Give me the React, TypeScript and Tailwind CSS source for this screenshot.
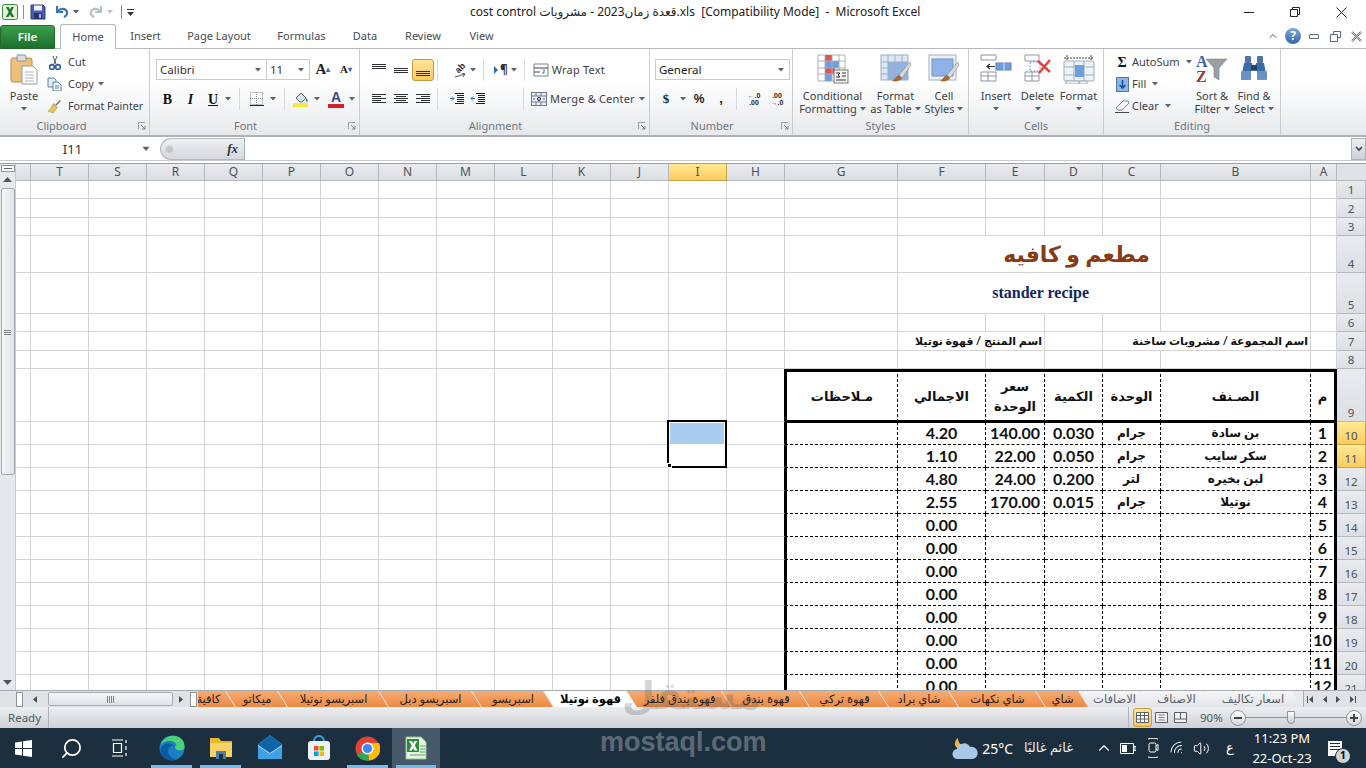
import type { ReactNode } from 'react'
import { ChevronUp, Search, Volume2, Wifi } from 'lucide-react'

const UI = "font-['Noto_Sans','DejaVu_Sans',sans-serif]"
const CELL = "font-['Lato','DejaVu_Sans',sans-serif]"

const COLS = ['', 'T', 'S', 'R', 'Q', 'P', 'O', 'N', 'M', 'L', 'K', 'J', 'I', 'H', 'G', 'F', 'E', 'D', 'C', 'B', 'A']

const RECIPE = [
  ['بن سادة', 'جرام', '0.030', '140.00', '4.20'],
  ['سكر سايب', 'جرام', '0.050', '22.00', '1.10'],
  ['لبن بخيره', 'لتر', '0.200', '24.00', '4.80'],
  ['نوتيلا', 'جرام', '0.015', '170.00', '2.55'],
]

const SHEET_TABS = [
  { name: 'كافية', w: 'w-[55px]', kind: 'orange' },
  { name: 'ميكاتو', w: 'w-[62px]', kind: 'orange' },
  { name: 'اسبريسو نوتيلا', w: 'w-[111px]', kind: 'orange' },
  { name: 'اسبريسو دبل', w: 'w-[103px]', kind: 'orange' },
  { name: 'اسبريسو', w: 'w-[82px]', kind: 'orange' },
  { name: 'قهوة نوتيلا', w: 'w-[93px]', kind: 'active' },
  { name: 'قهوة بندق فلفر', w: 'w-[105px]', kind: 'orange' },
  { name: 'قهوة بندق', w: 'w-[88px]', kind: 'orange' },
  { name: 'قهوة تركي', w: 'w-[89px]', kind: 'orange' },
  { name: 'شاي براد', w: 'w-[80px]', kind: 'orange' },
  { name: 'شاي نكهات', w: 'w-[97px]', kind: 'orange' },
  { name: 'شاي', w: 'w-[53px]', kind: 'orange' },
  { name: 'الاضافات', w: 'w-[71px]', kind: 'gray' },
  { name: 'الاصناف', w: 'w-[73px]', kind: 'gray' },
  { name: 'اسعار تكاليف', w: 'w-[100px]', kind: 'gray' },
]

function Caret({ className = '' }: { className?: string }) {
  return (
    <svg width="6" height="4" viewBox="0 0 6 4" className={className}>
      <path d="M0 0h6L3 3.5z" fill="#5b6168" />
    </svg>
  )
}

function Sep({ className = '' }: { className?: string }) {
  return <div className={`w-px h-[22px] bg-[#d5d8dc] ${className}`} />
}

function Launcher() {
  return (
    <svg width="8" height="8" viewBox="0 0 8 8" className="shrink-0">
      <path d="M.5 7V.5H7" fill="none" stroke="#9aa0a6" />
      <path d="M3 3l4 4M7 4v3H4" fill="none" stroke="#7b8188" />
    </svg>
  )
}

function Group({ label, className, children, launcher, labelPad = '' }: { label: string; className: string; children: ReactNode; launcher?: boolean; labelPad?: string }) {
  return (
    <div className={`flex flex-col shrink-0 h-[86px] border-r border-[#c9ccd1] ${className}`}>
      <div className="flex-1 flex min-h-0">{children}</div>
      <div className={`h-[18px] relative flex items-center justify-center text-[11px] text-[#6f767e] shrink-0 ${labelPad}`}>
        {label}
        {launcher && (
          <span className="absolute right-[3px] top-[5px]">
            <Launcher />
          </span>
        )}
      </div>
    </div>
  )
}

function BigButton({ icon, lines, className, caretLine }: { icon: ReactNode; lines: string[]; className: string; caretLine?: boolean }) {
  return (
    <div className={`flex flex-col items-center shrink-0 ${className}`}>
      <div className="h-[40px] pt-[5px] flex items-start justify-center">{icon}</div>
      {lines.map((l, i) => (
        <div key={l} className="h-[13px] leading-[13px] text-[11px] text-[#3b4148] whitespace-nowrap flex items-center gap-[3px]">
          {l}
          {caretLine && i === lines.length - 1 && <Caret />}
        </div>
      ))}
      {!caretLine && (
        <div className="h-[13px] flex items-center justify-center">
          <Caret />
        </div>
      )}
    </div>
  )
}

function LinesIcon({ rows, w = 14 }: { rows: [number, number, number][]; w?: number }) {
  return (
    <svg width={w} height="14" viewBox={`0 0 ${w} 14`}>
      {rows.map(([x, y, len]) => (
        <rect key={`${x}${y}`} x={x} y={y} width={len} height="1" fill="#2b2f33" />
      ))}
    </svg>
  )
}

function IndentIcon({ flip }: { flip?: boolean }) {
  return (
    <svg width="16" height="14" viewBox="0 0 16 14">
      <path d="M6 1.500h9M8 3.500h7M8 5.500h7M8 7.500h7M8 9.500h7M6 11.500h9" stroke="#1d1f22" fill="none" />
      {flip ? <path d="M5 6.500H1M3 4.500l-2 2 2 2" stroke="#2f6db5" fill="none" /> : <path d="M1 6.500h4M3 4.500l2 2-2 2" stroke="#2f6db5" fill="none" />}
    </svg>
  )
}

function PasteIcon() {
  return (
    <svg width="28" height="31" viewBox="0 0 28 31">
      <rect x="1" y="4" width="21" height="24" rx="2" fill="#eec07c" stroke="#b88a4c" />
      <rect x="7" y="1" width="9" height="6" rx="1" fill="#d9dde2" stroke="#8d9298" />
      <path d="M12 12h11l4 4v14H12z" fill="#fff" stroke="#8f98a3" />
      <path d="M15 18h9M15 21h9M15 24h9M15 27h9" stroke="#a9b4c0" />
    </svg>
  )
}

function CFIcon() {
  return (
    <svg width="32" height="30" viewBox="0 0 32 30">
      <path d="M1 1h27v26H1z" fill="#fff" stroke="#a9b2bd" />
      <rect x="8" y="1" width="7" height="6" fill="#e0524e" />
      <rect x="8" y="7" width="14" height="7" fill="#6f9ee0" />
      <rect x="8" y="14" width="10" height="6" fill="#e0524e" />
      <rect x="8" y="20" width="7" height="7" fill="#6f9ee0" />
      <path d="M8 1v26M15 1v26M22 1v26M1 7h27M1 14h27M1 20h27" stroke="#a9b2bd" fill="none" />
      <rect x="17" y="16" width="14" height="13" fill="#f4f4f4" stroke="#777" />
      <path d="M19 19h4l-2 2 2 2h-4M25 19h4M25 22h4M19 26h10" stroke="#333" fill="none" />
    </svg>
  )
}

function TableBrushIcon() {
  return (
    <svg width="32" height="30" viewBox="0 0 32 30">
      <rect x="1" y="1" width="27" height="25" fill="#dbe6f6" stroke="#a2aebc" />
      <rect x="8" y="8" width="20" height="18" fill="#8fb2e8" />
      <path d="M8 1v25M15 1v25M22 1v25M1 8h27M1 14h27M1 20h27" stroke="#a2aebc" fill="none" />
      <path d="M30 8L19 21l3 3L31 11z" fill="#d8d9da" stroke="#8e8e8e" strokeWidth=".6" />
      <path d="M19 21c-3 1-4 4-7 6 4 1 9 0 10-3z" fill="#a86a2c" />
    </svg>
  )
}

function CellStyleIcon() {
  return (
    <svg width="32" height="30" viewBox="0 0 32 30">
      <rect x="1" y="1" width="27" height="25" fill="#eef2f7" stroke="#a2aebc" />
      <rect x="4" y="5" width="21" height="17" fill="#8fb2e8" stroke="#6f92c8" />
      <path d="M30 8L19 21l3 3L31 11z" fill="#d8d9da" stroke="#8e8e8e" strokeWidth=".6" />
      <path d="M19 21c-3 1-4 4-7 6 4 1 9 0 10-3z" fill="#a86a2c" />
    </svg>
  )
}

function InsertCellsIcon() {
  return (
    <svg width="32" height="28" viewBox="0 0 32 28">
      <path d="M1 1h15v5H1zM1 18h15v9H1zM8 18v9M1 22h15" fill="#fff" stroke="#8d96a1" />
      <rect x="16" y="9" width="15" height="7" fill="#6f9ee0" stroke="#5f86bf" />
      <path d="M24 9v7" stroke="#dfe8f5" />
      <path d="M15 12.5H7M10 10l-3 2.5 3 2.5" stroke="#333" fill="none" strokeWidth="1.2" />
    </svg>
  )
}

function DeleteCellsIcon() {
  return (
    <svg width="28" height="28" viewBox="0 0 28 28">
      <path d="M1 1h14v6H1zM1 18h14v9H1zM8 18v9M1 22h14" fill="#fff" stroke="#8d96a1" />
      <rect x="6" y="8" width="10" height="9" fill="#fff" stroke="#5f86bf" strokeDasharray="1.5 1.5" />
      <path d="M14 7l12 11M26 6L15 19" stroke="#e0443e" strokeWidth="2.4" />
    </svg>
  )
}

function FormatCellsIcon() {
  return (
    <svg width="32" height="30" viewBox="0 0 32 30">
      <path d="M1 4h30M4 1v5M28 1v5" stroke="#444" strokeDasharray="2 1" fill="none" />
      <rect x="1" y="7" width="30" height="20" rx="1" fill="#eef2f7" stroke="#a2aebc" />
      <path d="M11 7v20M21 7v20M1 13h30M1 21h30" stroke="#a2aebc" />
      <rect x="12" y="11" width="9" height="12" fill="#6f9ee0" />
      <path d="M3 27h13v3H3zM16 27h8v3h-8z" fill="#eef2f7" stroke="#a2aebc" />
    </svg>
  )
}

function FunnelSort() {
  return (
    <div className="h-[29px] w-[32px] flex">
      <div className="font-['Liberation_Serif',serif] font-bold text-[16px] leading-[15px] flex flex-col w-[12px]">
        <span className="text-[#3a62ae]">A</span>
        <span className="text-[#9c3a36]">Z</span>
      </div>
      <svg width="22" height="24" viewBox="0 0 22 24" className="mt-[4px] -ml-[2px]">
        <path d="M0 1h21l-8 9v12l-5-3v-9z" fill="#9a9fa5" stroke="#7e8388" strokeWidth=".6" />
      </svg>
    </div>
  )
}

function Binoculars() {
  return (
    <svg width="28" height="28" viewBox="0 0 28 28">
      <rect x="5" y="2" width="6" height="7" rx="1" fill="#4d74a6" />
      <rect x="17" y="2" width="6" height="7" rx="1" fill="#4d74a6" />
      <path d="M4 9h8l1 5h2l1-5h8l3 16H19l-2-8h-6l-2 8H1z" fill="#3f6ba3" />
      <rect x="1" y="17" width="10" height="9" rx="1" fill="#6b92c4" />
      <rect x="17" y="17" width="10" height="9" rx="1" fill="#6b92c4" />
      <rect x="11" y="11" width="6" height="5" fill="#23436f" />
    </svg>
  )
}

function TitleBar() {
  return (
    <div className="h-[24px] shrink-0 flex items-center bg-white">
      <div className="w-[470px] flex items-center shrink-0 pl-[2px] gap-[5px]">
        <svg width="16" height="16" viewBox="0 0 16 16">
          <rect x=".5" y=".5" width="15" height="15" rx="2" fill="#dff0d8" stroke="#3c8a3c" />
          <path d="M4 3h2.7L8 5.8 9.4 3h2.5L9.3 8l2.9 5H9.4L8 10.2 6.5 13H3.9l2.8-5z" fill="#1f6e2b" />
        </svg>
        <div className="w-px h-[14px] bg-[#8a8f95]" />
        <svg width="16" height="16" viewBox="0 0 16 16" className="ml-[1px]">
          <path d="M1 1h12l2 2v12H1z" fill="#4a5db5" stroke="#2f3d80" />
          <rect x="4" y="1.5" width="8" height="5" fill="#eef1f8" />
          <rect x="4" y="9" width="8" height="6" fill="#27336b" />
          <rect x="9" y="10" width="2" height="4" fill="#a9b4dc" />
        </svg>
        <svg width="14" height="14" viewBox="0 0 14 14" className="ml-[4px]">
          <path d="M2 1v6h6" fill="none" stroke="#3a74bb" strokeWidth="2" />
          <path d="M3 6c2-3 8-3 9 1 .5 2-1 4-3 5" fill="none" stroke="#3a74bb" strokeWidth="2.2" />
        </svg>
        <Caret className="-ml-[1px]" />
        <svg width="14" height="14" viewBox="0 0 14 14" className="ml-[5px]">
          <path d="M12 1v6H6" fill="none" stroke="#b7bfc7" strokeWidth="2" />
          <path d="M11 6C9 3 3 3 2 7c-.5 2 1 4 3 5" fill="none" stroke="#b7bfc7" strokeWidth="2.2" />
        </svg>
        <Caret className="opacity-40 -ml-[1px]" />
        <div className="w-px h-[14px] bg-[#8a8f95] ml-[3px]" />
        <svg width="7" height="7" viewBox="0 0 7 7">
          <path d="M0 0h7v1H0zM0 3h7L3.5 7z" fill="#333" />
        </svg>
      </div>
      <div className="text-[12px] text-[#222] whitespace-pre w-[430px]">
        cost control قعدة زمان2023 - مشروبات.xls  [Compatibility Mode]  -  Microsoft Excel
      </div>
      <div className="ml-auto flex items-center pr-[2px]">
        <div className="w-[46px] h-[24px] flex items-center justify-center">
          <div className="w-[10px] h-px bg-[#222]" />
        </div>
        <div className="w-[46px] h-[24px] flex items-center justify-center">
          <svg width="10" height="10" viewBox="0 0 10 10">
            <path d="M2.5 2.5V.5h7v7h-2M.5 2.5h7v7h-7z" fill="none" stroke="#222" />
          </svg>
        </div>
        <div className="w-[46px] h-[24px] flex items-center justify-center">
          <svg width="11" height="11" viewBox="0 0 11 11">
            <path d="M.5.5l10 10M10.5.5l-10 10" stroke="#222" />
          </svg>
        </div>
      </div>
    </div>
  )
}

function MenuTabs() {
  const tabs = [
    { t: 'Insert', w: 'w-[57px]' },
    { t: 'Page Layout', w: 'w-[90px]' },
    { t: 'Formulas', w: 'w-[75px]' },
    { t: 'Data', w: 'w-[52px]' },
    { t: 'Review', w: 'w-[64px]' },
    { t: 'View', w: 'w-[53px]' },
  ]
  return (
    <div className="h-[25px] shrink-0 flex items-end bg-white border-b border-[#b5b9be] text-[11px] text-[#454c55]">
      <div className="w-[55px] h-[24px] mb-[-1px] rounded-t-[3px] bg-linear-to-b from-[#3c9e4c] to-[#1c6f2c] text-white font-semibold text-[11.5px] flex items-center justify-center border border-[#1d6a2b]">
        File
      </div>
      <div className="w-[56px] h-[25px] ml-[5px] mb-[-1px] bg-white rounded-t-[3px] border border-b-0 border-[#b5b9be] flex items-center justify-center z-10">
        Home
      </div>
      <div className="w-[1px]" />
      {tabs.map((tab) => (
        <div key={tab.t} className={`${tab.w} h-[24px] flex items-center justify-center`}>
          {tab.t}
        </div>
      ))}
      <div className="ml-auto h-[24px] flex items-center pr-[3px]">
        <ChevronUp size={12} strokeWidth={2} className="text-[#555] mr-[6px]" />
        <div className="w-[16px] h-[16px] rounded-full bg-linear-to-b from-[#7ea9df] to-[#2f66b0] text-white text-[12px] font-bold flex items-center justify-center mr-[8px]">
          ?
        </div>
        <div className="w-[10px] h-[5px] rounded-[1px] border border-[#5e6770] mr-[11px]" />
        <svg width="11" height="11" viewBox="0 0 11 11" className="mr-[10px]">
          <path d="M3.5 3V.5h7v6H8M.5 3.5h7v7h-7z" fill="none" stroke="#5e6770" />
        </svg>
        <svg width="11" height="11" viewBox="0 0 11 11" className="mr-[1px]">
          <path d="M1 1l9 9M10 1l-9 9" stroke="#5e6770" strokeWidth="2" />
          <path d="M1 1l9 9M10 1l-9 9" stroke="#fff" strokeWidth=".7" />
        </svg>
      </div>
    </div>
  )
}

function Clipboard() {
  return (
    <Group label="Clipboard" className="w-[150px]" launcher labelPad="pr-[26px]">
      <div className="w-[48px] shrink-0 flex flex-col items-center">
        <div className="h-[37px] pt-[5px]">
          <PasteIcon />
        </div>
        <div className="h-[17px] leading-[17px] text-[11px] text-[#3b4148] mt-[1px]">Paste</div>
        <Caret className="mt-[3px]" />
      </div>
      <div className="flex flex-col pt-[2px] text-[11px] text-[#3b4148]">
        <div className="h-[22px] flex items-center">
          <svg width="14" height="15" viewBox="0 0 14 15" className="mr-[6px]">
            <path d="M5 1l3 8M9 1L6 9" stroke="#555" fill="none" />
            <circle cx="4" cy="12" r="2.4" fill="none" stroke="#2f5f9f" strokeWidth="1.6" />
            <circle cx="10" cy="12" r="2.4" fill="none" stroke="#2f5f9f" strokeWidth="1.6" />
          </svg>
          Cut
        </div>
        <div className="h-[22px] flex items-center -ml-[1px]">
          <svg width="15" height="14" viewBox="0 0 15 14" className="mr-[6px]">
            <path d="M1 1h6l2 2v7H1z" fill="#e8eef7" stroke="#5b7fb0" />
            <path d="M6 5h5l3 3v6H6z" fill="#fff" stroke="#5b7fb0" />
            <path d="M8 9h4M8 11h4" stroke="#5b7fb0" />
          </svg>
          Copy
          <Caret className="ml-[4px]" />
        </div>
        <div className="h-[22px] flex items-center -ml-[1px]">
          <svg width="15" height="15" viewBox="0 0 15 15" className="mr-[6px]">
            <path d="M8 6l5-5 1 1-5 5z" fill="#8a6c3c" />
            <path d="M7 4l4 4-1 1-4-4z" fill="#b9bec4" />
            <path d="M6 5l4 4-4 5-5-2c2-1 3-3 5-7z" fill="#e8c65a" stroke="#a58836" strokeWidth=".5" />
          </svg>
          <span className="whitespace-nowrap text-[10.7px]">Format Painter</span>
        </div>
      </div>
    </Group>
  )
}

function FontGroup() {
  return (
    <Group label="Font" className="w-[210px]" launcher labelPad="pr-[18px]">
      <div className="flex flex-col pl-[6px] text-[#333]">
        <div className="h-[21px] mt-[10px] flex items-center">
          <div className="w-[111px] h-[21px] border border-[#c8ccd1] bg-white flex items-center px-[3px] text-[11.5px]">
            Calibri
            <Caret className="ml-auto mr-[2px]" />
          </div>
          <div className="w-[43px] h-[21px] border border-l-0 border-[#c8ccd1] bg-white flex items-center px-[3px] text-[11.5px]">
            11
            <Caret className="ml-auto mr-[2px]" />
          </div>
          <div className="w-[24px] ml-[1px] text-center font-['Liberation_Serif',serif] font-bold text-[15px] leading-[15px] text-[#222]">
            A<span className="text-[8px] align-top text-[#2f6db5]">▴</span>
          </div>
          <div className="w-[22px] text-center font-['Liberation_Serif',serif] font-bold text-[11px] leading-[15px] text-[#222]">
            A<span className="text-[8px] align-top text-[#2f6db5]">▾</span>
          </div>
        </div>
        <div className="h-[22px] mt-[8px] flex items-center font-['Liberation_Serif',serif] text-[14px] text-[#111]">
          <div className="w-[23px] text-center font-bold">B</div>
          <div className="w-[23px] text-center italic font-bold">I</div>
          <div className="w-[22px] text-center font-bold underline">U</div>
          <Caret className="ml-[1px]" />
          <Sep className="ml-[8px]" />
          <svg width="14" height="14" viewBox="0 0 14 14" className="ml-[10px]">
            <rect x=".5" y=".5" width="12" height="12" fill="none" stroke="#8c8c8c" strokeDasharray="1 1" />
            <path d="M6.5 0v13M0 6.5h13" stroke="#8c8c8c" strokeDasharray="1 1" />
            <path d="M0 13.5h14" stroke="#222" />
          </svg>
          <Caret className="ml-[6px]" />
          <Sep className="ml-[8px]" />
          <svg width="16" height="16" viewBox="0 0 16 16" className="ml-[8px]">
            <path d="M3 7l5-5 5 5-4 4H7z" fill="#d9e2ec" stroke="#5b6773" />
            <path d="M13 7c1 1 2 2 2 3s-1.500 1-2 0z" fill="#3a74bb" />
            <rect x="0" y="12" width="15" height="4" fill="#f5e93a" />
          </svg>
          <Caret className="ml-[5px]" />
          <div className="ml-[8px] w-[16px] flex flex-col items-center font-['Liberation_Sans',sans-serif] font-bold text-[14px] leading-[12px] text-[#3b4a80]">
            A<div className="w-[16px] h-[4px] bg-[#d5202a] mt-[1px]" />
          </div>
          <Caret className="ml-[5px]" />
        </div>
      </div>
    </Group>
  )
}

function AlignmentGroup() {
  const wide = 14
  return (
    <Group label="Alignment" className="w-[290px]" launcher labelPad="pr-[18px]">
      <div className="flex flex-col pl-[8px] text-[11px] text-[#3b4148]">
        <div className="h-[22px] mt-[10px] flex items-center">
          <div className="w-[22px] flex justify-center">
            <LinesIcon rows={[[0, 1, wide], [0, 3, wide], [0, 5, wide]]} />
          </div>
          <div className="w-[22px] flex justify-center">
            <LinesIcon rows={[[0, 5, wide], [0, 7, wide], [0, 9, wide]]} />
          </div>
          <div className="w-[22px] h-[22px] rounded-[3px] bg-linear-to-b from-[#fde69a] to-[#fbc85f] border border-[#c29b3e] flex justify-center items-center">
            <LinesIcon rows={[[0, 8, wide], [0, 10, wide], [0, 12, wide]]} />
          </div>
          <Sep className="ml-[3px]" />
          <div className="ml-[13px] w-[18px] h-[16px] relative overflow-visible">
            <span className="block -rotate-45 font-['Liberation_Sans',sans-serif] font-bold text-[9px] leading-[12px] text-[#222] text-center">ab</span>
            <svg width="18" height="5" viewBox="0 0 18 5" className="absolute left-0 bottom-0">
              <path d="M4 4l10-3M11 0l3 1-2 3" stroke="#555" fill="none" />
            </svg>
          </div>
          <Caret className="ml-[1px]" />
          <Sep className="ml-[7px]" />
          <svg width="15" height="12" viewBox="0 0 15 12" className="ml-[10px]">
            <path d="M0 2l4 4-4 4z" fill="#2f6db5" />
          </svg>
          <span className="-ml-[9px] font-bold text-[12px] leading-none text-[#333]">¶</span>
          <Caret className="ml-[3px]" />
          <Sep className="ml-[7px]" />
          <svg width="16" height="14" viewBox="0 0 16 14" className="ml-[8px]">
            <path d="M1 1h14v12H1z" fill="none" stroke="#7a8087" />
            <path d="M1 5h14M1 9h6" stroke="#444" />
            <path d="M11 6v4H9" stroke="#2f6db5" fill="none" />
          </svg>
          <span className="ml-[3px] tracking-[0.2px] whitespace-nowrap">Wrap Text</span>
        </div>
        <div className="h-[22px] mt-[7px] flex items-center">
          <div className="w-[22px] flex justify-center">
            <LinesIcon rows={[[0, 2, wide], [0, 4, 9], [0, 6, wide], [0, 8, 9], [0, 10, wide]]} />
          </div>
          <div className="w-[22px] flex justify-center">
            <LinesIcon rows={[[0, 2, wide], [2, 4, 10], [0, 6, wide], [2, 8, 10], [0, 10, wide]]} />
          </div>
          <div className="w-[22px] flex justify-center">
            <LinesIcon rows={[[0, 2, wide], [5, 4, 9], [0, 6, wide], [5, 8, 9], [0, 10, wide]]} />
          </div>
          <Sep className="ml-[3px]" />
          <div className="ml-[11px]">
            <IndentIcon />
          </div>
          <div className="ml-[5px]">
            <IndentIcon flip />
          </div>
          <Sep className="ml-[37px]" />
          <svg width="16" height="14" viewBox="0 0 16 14" className="ml-[7px]">
            <rect x=".5" y=".5" width="15" height="13" fill="#e8eef7" stroke="#6f7a88" />
            <path d="M.5 4h15M.5 10h15M5 .5V4M10 .5V4M5 10v4M10 10v4" stroke="#6f7a88" />
            <path d="M2 7h2M12 7h2" stroke="#2f6db5" />
            <circle cx="8" cy="7" r="1.500" fill="none" stroke="#222" />
          </svg>
          <span className="ml-[3px] tracking-[0.2px] whitespace-nowrap">Merge &amp; Center</span>
          <Caret className="ml-[4px]" />
        </div>
      </div>
    </Group>
  )
}

function NumberGroup() {
  return (
    <Group label="Number" className="w-[143px]" launcher labelPad="pr-[18px]">
      <div className="flex flex-col pl-[5px] text-[#222]">
        <div className="w-[135px] h-[21px] mt-[10px] border border-[#c8ccd1] bg-white flex items-center px-[3px] text-[11.5px]">
          General
          <Caret className="ml-auto mr-[2px]" />
        </div>
        <div className="h-[22px] mt-[8px] flex items-center font-['Liberation_Sans',sans-serif]">
          <div className="w-[14px] ml-[4px] text-center font-bold text-[13px] font-['Liberation_Serif',serif]">$</div>
          <Caret className="ml-[7px]" />
          <div className="w-[16px] ml-[5px] text-center text-[12px] font-bold">%</div>
          <div className="w-[10px] ml-[9px] text-center text-[13px] font-bold leading-[10px]">,</div>
          <Sep className="ml-[10px]" />
          <div className="ml-[7px] w-[20px] text-[7px] leading-[7px] font-bold text-center">
            <span className="text-[#2f6db5]">←</span>.0
            <br />
            .00
          </div>
          <div className="ml-[3px] w-[20px] text-[7px] leading-[7px] font-bold text-center">
            .00
            <br />
            <span className="text-[#2f6db5]">→</span>.0
          </div>
        </div>
      </div>
    </Group>
  )
}

function StylesGroup() {
  return (
    <Group label="Styles" className="w-[176px]">
      <BigButton icon={<CFIcon />} lines={['Conditional', 'Formatting']} className="w-[77px] ml-[1px]" caretLine />
      <BigButton icon={<TableBrushIcon />} lines={['Format', 'as Table']} className="w-[49px]" caretLine />
      <BigButton icon={<CellStyleIcon />} lines={['Cell', 'Styles']} className="w-[48px]" caretLine />
    </Group>
  )
}

function CellsGroup() {
  return (
    <Group label="Cells" className="w-[135px]">
      <BigButton icon={<InsertCellsIcon />} lines={['Insert']} className="w-[50px] ml-[2px]" />
      <BigButton icon={<DeleteCellsIcon />} lines={['Delete']} className="w-[33px]" />
      <BigButton icon={<FormatCellsIcon />} lines={['Format']} className="w-[49px]" />
    </Group>
  )
}

function EditingGroup() {
  return (
    <Group label="Editing" className="w-[177px]">
      <div className="w-[92px] flex flex-col pt-[2px] pl-[8px] text-[11px] text-[#3b4148] shrink-0">
        <div className="h-[22px] flex items-center">
          <span className="w-[20px] text-center font-['Liberation_Serif',serif] font-bold text-[14px] text-[#111]">Σ</span>
          {'AutoSum'}
          <Caret className="ml-[6px]" />
        </div>
        <div className="h-[22px] flex items-center">
          <span className="w-[20px] flex justify-center">
            <svg width="13" height="15" viewBox="0 0 13 15">
              <rect x=".5" y=".5" width="12" height="14" fill="#8fb6e6" stroke="#4f79ad" />
              <path d="M6.500 3v7M3.500 8l3 3 3-3" stroke="#174f97" strokeWidth="1.600" fill="none" />
            </svg>
          </span>
          Fill
          <Caret className="ml-[6px]" />
        </div>
        <div className="h-[22px] flex items-center">
          <span className="w-[20px] flex justify-center">
            <svg width="15" height="13" viewBox="0 0 15 13">
              <path d="M1 8l7-7h5l1 2-7 7H3z" fill="#f4f5f7" stroke="#7b8a9b" />
              <path d="M0 12.500h14" stroke="#444" />
            </svg>
          </span>
          Clear
          <Caret className="ml-[6px]" />
        </div>
      </div>
      <BigButton icon={<FunnelSort />} lines={['Sort &', 'Filter']} className="w-[40px] -ml-[4px]" caretLine />
      <BigButton icon={<Binoculars />} lines={['Find &', 'Select']} className="w-[42px] ml-[1px]" caretLine />
    </Group>
  )
}

function Ribbon() {
  return (
    <div className={`h-[86px] shrink-0 flex bg-linear-to-b from-white from-40% to-[#e6e8eb] border-b-2 border-[#aeb2b7] box-content ${UI}`}>
      <Clipboard />
      <FontGroup />
      <AlignmentGroup />
      <NumberGroup />
      <StylesGroup />
      <CellsGroup />
      <EditingGroup />
    </div>
  )
}

function FormulaBar() {
  return (
    <div className={`h-[24px] shrink-0 flex bg-white pt-[1px] border-b border-[#c7cace] ${UI}`}>
      <div className="w-[160px] h-[22px] flex items-center text-[13px] text-[#333]">
        <span className="w-[143px] text-center pl-[2px] pt-[1px]">I11</span>
        <Caret className="scale-125" />
      </div>
      <div className="w-[84px] h-[22px] rounded-l-full bg-linear-to-b from-[#eef0f2] to-[#d5d8dc] border border-r-0 border-[#b5b9be] flex items-center pl-[4px]">
        <div className="w-[9px] h-[9px] rounded-full bg-[#c3c7cc] border border-[#d8dbdf]" />
        <span className="ml-auto mr-[6px] font-['Liberation_Serif',serif] italic font-bold text-[13px] text-[#333]">fx</span>
      </div>
      <div className="flex-1 h-[22px] border-l border-[#a9adb2]" />
      <div className="w-[15px] h-[22px] bg-linear-to-b from-[#eceef0] to-[#cdd0d5] border border-[#aeb2b7] flex items-center justify-center">
        <svg width="8" height="6" viewBox="0 0 8 6">
          <path d="M1 1l3 3 3-3" stroke="#444" strokeWidth="1.600" fill="none" />
        </svg>
      </div>
    </div>
  )
}

function VScrollbar() {
  return (
    <div className="w-[16px] h-full shrink-0 flex flex-col items-center bg-[#e6e8eb] border-r border-[#c6c9cd]">
      <div className="w-[14px] h-[7px] mt-[1px] bg-white border border-[#8e949a] flex items-center justify-center">
        <div className="w-[8px] h-px bg-[#666]" />
      </div>
      <div className="h-[15px] flex items-center justify-center">
        <svg width="9" height="5" viewBox="0 0 9 5">
          <path d="M0 5l4.500-5L9 5z" fill="#50565c" />
        </svg>
      </div>
      <div className="w-[14px] h-[287px] mt-[1px] rounded-[2px] border border-[#a6abb1] bg-linear-to-r from-[#f6f7f8] to-[#dfe2e6] flex flex-col items-center pt-[141px] gap-px">
        <div className="w-[7px] h-px bg-[#7e848a]" />
        <div className="w-[7px] h-px bg-[#7e848a]" />
        <div className="w-[7px] h-px bg-[#7e848a]" />
      </div>
      <div className="mt-auto mb-[5px]">
        <svg width="9" height="5" viewBox="0 0 9 5">
          <path d="M0 0l4.500 5L9 0z" fill="#50565c" />
        </svg>
      </div>
    </div>
  )
}

const plain = 'border-r border-b border-[#d4d4d4]'
const dash = 'border-r border-b border-dashed border-black'
const selectedHead = 'bg-linear-to-b from-[#ffea94] to-[#fccb5f] border-[#c5a343]'

function RowHead({ n, selected }: { n: number; selected?: boolean }) {
  return (
    <div
      className={`border-b border-r flex items-end justify-center pb-[1px] text-[11.5px] leading-[14px] text-[#4b5159] ${UI} ${
        selected ? selectedHead : 'bg-linear-to-b from-[#e9ebee] to-[#dcdfe3] border-[#b5b9be]'
      }`}
    >
      {n}
    </div>
  )
}

function LeftCells({ tableBorder, row }: { tableBorder?: boolean; row: number }) {
  return (
    <>
      {COLS.slice(0, 14).map((c, i) => (
        <div key={`${row}-${i}`} className={`relative ${plain} ${i === 13 && tableBorder ? 'border-r-black' : ''}`}>
          {row === 10 && c === 'I' && (
            <div className="absolute -left-[2px] -top-[2px] w-[60px] h-[48px] border-[2px] border-black bg-white z-10">
              <div className="h-[21px] bg-[#a9cdf1] m-[1px]" />
              <div className="absolute -left-[2px] -bottom-[2px] w-[5px] h-[5px] bg-black border border-white" />
            </div>
          )}
        </div>
      ))}
    </>
  )
}

function Blanks({ n, row }: { n: number; row: number }) {
  return (
    <>
      {Array.from({ length: n }).map((_, i) => (
        <div key={`${row}-b${i}`} className={plain} />
      ))}
    </>
  )
}

function HeaderCell({ children, cls }: { children: ReactNode; cls: string }) {
  return (
    <div className={`flex items-center justify-center text-center font-bold text-[13px] leading-[20px] text-[#111] border-t-[3px] border-t-black border-b-2 border-b-black border-r border-dashed border-r-black [border-top-style:solid] [border-bottom-style:solid] ${cls}`}>
      {children}
    </div>
  )
}

function DataRow({ n, row, cells }: { n: number; row: number; cells?: string[] }) {
  const [item = '', unit = '', qty = '', price = '', total = '0.00'] = cells ?? []
  const topLine = row === 10 ? 'border-t border-t-black [border-top-style:solid]' : ''
  const num = 'flex items-center justify-center pb-[1px] font-bold text-[16px] text-[#111] leading-none'
  const word = 'flex items-center justify-center pb-[1px] font-bold text-[12px] text-[#111] leading-none'
  return (
    <>
      <LeftCells row={row} tableBorder />
      <div className={`${dash} ${topLine} border-l-2 border-l-black [border-left-style:solid]`} />
      <div className={`${dash} ${topLine} ${num}`}>{total}</div>
      <div className={`${dash} ${topLine} ${num}`}>{price}</div>
      <div className={`${dash} ${topLine} ${num}`}>{qty}</div>
      <div className={`${dash} ${topLine} ${word}`}>{unit}</div>
      <div className={`${dash} ${topLine} ${word}`}>{item}</div>
      <div className={`${topLine} ${num} border-b border-dashed border-b-black border-r-[3px] border-r-black [border-right-style:solid]`}>{n}</div>
      <RowHead n={row} selected={row === 10 || row === 11} />
    </>
  )
}

function Sheet() {
  const rows = Array.from({ length: 12 }, (_, i) => i)
  return (
    <div className={`grid w-[1350px] h-[526px] overflow-hidden bg-white shrink-0 ${CELL} grid-cols-[15px_repeat(13,58px)_113px_88px_59px_58px_58px_150px_26px_29px] grid-rows-[17px_18px_19px_18px_37px_41px_18px_19px_18px_53px_repeat(12,23px)]`}>
      {COLS.map((c) => (
        <div
          key={`h${c}`}
          className={`border-r border-b flex items-center justify-center text-[12px] text-[#4b5159] ${UI} ${
            c === 'I' ? selectedHead : 'bg-linear-to-b from-[#e9ebee] to-[#dcdfe3] border-[#b5b9be]'
          }`}
        >
          {c}
        </div>
      ))}
      <div className={`border-b border-[#b5b9be] bg-[#dfe2e6] ${UI}`} />

      {[1, 2, 3].map((r) => (
        <div key={r} className="contents">
          <LeftCells row={r} />
          <Blanks n={7} row={r} />
          <RowHead n={r} />
        </div>
      ))}

      <LeftCells row={4} />
      <div className={plain} />
      <div className={`col-span-4 ${plain} flex items-center justify-end pr-[10px] text-[22px] text-[#8a3a12] font-bold leading-none`}>
        مطعم و كافيه
      </div>
      <div className={plain} />
      <div className={plain} />
      <RowHead n={4} />

      <LeftCells row={5} />
      <div className={plain} />
      <div className={`col-span-4 ${plain} flex items-center justify-end pr-[71px] font-['Liberation_Serif',serif] font-bold text-[16px] text-[#12265e]`}>
        stander recipe
      </div>
      <div className={plain} />
      <div className={plain} />
      <RowHead n={5} />

      <LeftCells row={6} />
      <Blanks n={7} row={6} />
      <RowHead n={6} />

      <LeftCells row={7} />
      <div className={plain} />
      <div className={`col-span-2 ${plain} flex items-center justify-end pr-[2px] text-[11px] font-bold text-[#111] whitespace-nowrap`}>
        اسم المنتج / قهوة نوتيلا
      </div>
      <div className={plain} />
      <div className={`col-span-2 ${plain} flex items-center justify-end pr-[2px] text-[11px] font-bold text-[#111] whitespace-nowrap`}>
        اسم المجموعة / مشروبات ساخنة
      </div>
      <div className={plain} />
      <RowHead n={7} />

      <LeftCells row={8} />
      <Blanks n={7} row={8} />
      <RowHead n={8} />

      <LeftCells row={9} tableBorder />
      <HeaderCell cls="border-l-2 border-l-black [border-left-style:solid]">مـلاحظات</HeaderCell>
      <HeaderCell cls="">الاجمالي</HeaderCell>
      <HeaderCell cls="">
        <span>
          سعر
          <br />
          الوحدة
        </span>
      </HeaderCell>
      <HeaderCell cls="">الكمية</HeaderCell>
      <HeaderCell cls="">الوحدة</HeaderCell>
      <HeaderCell cls="">الصـنف</HeaderCell>
      <HeaderCell cls="border-r-[3px] border-r-black [border-right-style:solid]">م</HeaderCell>
      <RowHead n={9} />

      {rows.map((i) => (
        <div key={i} className="contents">
          <DataRow n={i + 1} row={i + 10} cells={RECIPE[i]} />
        </div>
      ))}
    </div>
  )
}

function SheetTab({ name, w, kind }: { name: string; w: string; kind: string }) {
  const skin =
    kind === 'active'
      ? 'bg-white font-bold text-black z-10'
      : kind === 'gray'
        ? 'bg-linear-to-b from-[#f5f6f7] to-[#e2e4e8] text-[#5a6068]'
        : 'bg-linear-to-b from-[#f6ab70] to-[#ec8a44] text-[#2a2016]'
  return (
    <div className={`${w} shrink-0 -mr-[10px] last:mr-0 h-full flex items-center justify-center pb-[1px] text-[11.5px] leading-none whitespace-nowrap [clip-path:polygon(0_0,calc(100%-11px)_0,calc(100%-1px)_100%,10px_100%)] ${skin}`}>
      {name}
    </div>
  )
}

function NavArrow({ left, bar }: { left?: boolean; bar?: boolean }) {
  return (
    <svg width="9" height="9" viewBox="0 0 9 9">
      <path d={left ? 'M7 1v7L3 4.500z' : 'M2 1v7l4-3.500z'} fill="#4b5159" />
      {bar && <path d={left ? 'M1.500 1v7' : 'M7.500 1v7'} stroke="#4b5159" />}
    </svg>
  )
}

function TabStrip() {
  return (
    <div className={`h-[17px] shrink-0 flex bg-[#dfe2e6] border-t border-[#a6abb1] ${CELL}`}>
      <div className="w-[198px] shrink-0 flex items-center pl-[16px]">
        <div className="w-[7px] h-[15px] bg-white border border-[#8e949a]" />
        <span className="ml-[7px]">
          <NavArrow left />
        </span>
        <div className="w-[125px] h-[14px] ml-[9px] rounded-[2px] border border-[#a6abb1] bg-linear-to-b from-[#f6f7f8] to-[#dfe2e6] flex items-center justify-center gap-px">
          <div className="w-px h-[7px] bg-[#7e848a]" />
          <div className="w-px h-[7px] bg-[#7e848a]" />
          <div className="w-px h-[7px] bg-[#7e848a]" />
          <div className="w-px h-[7px] bg-[#7e848a]" />
        </div>
        <span className="ml-[4px]">
          <NavArrow />
        </span>
        <div className="w-[7px] h-[15px] ml-[4px] bg-white border border-[#8e949a]" />
      </div>
      <div className="w-[1105px] shrink-0 flex justify-end overflow-hidden bg-[#e8eaec]">
        {SHEET_TABS.map((t) => (
          <SheetTab key={t.name} {...t} />
        ))}
      </div>
      <div className="flex-1 flex items-center justify-between pl-[2px] pr-[9px] border-l border-[#a6abb1]">
        <NavArrow left bar />
        <NavArrow left />
        <NavArrow />
        <NavArrow bar />
      </div>
    </div>
  )
}

function StatusBar() {
  return (
    <div className={`h-[21px] shrink-0 flex items-center bg-linear-to-b from-[#eceef0] to-[#ced1d6] text-[11.5px] text-[#50565c] ${UI}`}>
      <div className="w-[49px] h-full border-r border-[#b1b5ba] flex items-center pl-[8px]">Ready</div>
      <div className="ml-auto h-full flex items-center pr-[4px]">
        <div className="w-px h-full bg-[#b1b5ba] mr-[4px]" />
        <div className="w-[19px] h-[19px] rounded-[3px] bg-linear-to-b from-[#fde69a] to-[#fbc85f] border border-[#c29b3e] flex items-center justify-center">
          <svg width="13" height="11" viewBox="0 0 13 11">
            <path d="M.5.5h12v10H.5zM4.500.5v10M8.500.5v10M.5 3.500h12M.5 7h12" fill="#fff" stroke="#5b6168" />
          </svg>
        </div>
        <svg width="13" height="11" viewBox="0 0 13 11" className="ml-[3px]">
          <path d="M.5.5h12v10H.5z" fill="#eef0f2" stroke="#5b6168" />
          <path d="M3.500 3h6M3.500 5.500h6M3.500 8h6" stroke="#7b8188" />
        </svg>
        <svg width="13" height="11" viewBox="0 0 13 11" className="ml-[6px]">
          <path d="M.5.5h12v10H.5z" fill="#eef0f2" stroke="#5b6168" />
          <path d="M6.500.5V7M.5 7H12" stroke="#5b6168" />
        </svg>
        <span className="ml-[13px] w-[22px] whitespace-nowrap">90%</span>
        <div className="ml-[8px] w-[16px] h-[16px] rounded-full border border-[#8e949a] bg-linear-to-b from-white to-[#d3d6da] flex items-center justify-center">
          <div className="w-[8px] h-[2px] bg-[#444]" />
        </div>
        <div className="w-[100px] h-px bg-[#8e949a] flex justify-center pr-[10px]">
          <div className="-mt-[6px] w-[8px] h-[13px] bg-linear-to-b from-white to-[#c8ccd1] border border-[#8e949a] rounded-b-[4px] shrink-0" />
        </div>
        <div className="w-[16px] h-[16px] rounded-full border border-[#8e949a] bg-linear-to-b from-white to-[#d3d6da] flex items-center justify-center relative">
          <div className="w-[8px] h-[2px] bg-[#444]" />
          <div className="absolute w-[2px] h-[8px] bg-[#444]" />
        </div>
      </div>
    </div>
  )
}

function TaskSlot({ children, className = '', open, active }: { children: ReactNode; className?: string; open?: boolean; active?: boolean }) {
  return (
    <div className={`h-full flex items-center justify-center relative shrink-0 ${active ? 'bg-[#45596a]' : ''} ${className}`}>
      {children}
      {open && <div className="absolute left-[4px] right-[4px] bottom-0 h-[3px] bg-[#76b9ed]" />}
    </div>
  )
}

function Taskbar() {
  return (
    <div className={`h-[40px] shrink-0 flex items-center bg-[#1c2f3f] text-white ${UI}`}>
      <TaskSlot className="w-[47px]">
        <svg width="17" height="17" viewBox="0 0 17 17">
          <path d="M0 2.500l7-1v6.500H0zM8 1.300L17 0v8H8zM0 9h7v6.500l-7-1zM8 9h9v8l-9-1.300z" fill="#fff" />
        </svg>
      </TaskSlot>
      <TaskSlot className="w-[49px]">
        <Search size={23} strokeWidth={1.8} className="text-white -scale-x-100" />
      </TaskSlot>
      <TaskSlot className="w-[48px]">
        <svg width="18" height="18" viewBox="0 0 18 18">
          <path d="M1 1h11M1 17h11M2.500 4.500h8v9h-8zM15 1v3M15 7v4M15 14v3" stroke="#fff" fill="none" strokeWidth="1.200" />
        </svg>
      </TaskSlot>
      <TaskSlot className="w-[49px] ml-[3px]" open>
        <svg width="26" height="26" viewBox="0 0 26 26">
          <circle cx="13" cy="13" r="12.500" fill="#1a7fc4" />
          <path d="M2 9C5 2 13-1 20 2c4 2 6 6 5.500 11-1 2-4 3-7 2-3-1-3-4-1-5-1-3-5-5-9-4-3 1-5 2-6.500 3z" fill="#4ad27a" />
          <path d="M9 16c0 4 3 7 8 8-6 3-13 0-15-6-1-3 0-6 2-8 4-3 9-2 12 1-3-1-7 1-7 5z" fill="#0c5ba0" />
        </svg>
      </TaskSlot>
      <TaskSlot className="w-[49px]" open>
        <svg width="24" height="24" viewBox="0 0 24 24">
          <path d="M1 2h9l2 3h11v3H1z" fill="#e9b632" />
          <path d="M1 7h22v14H1z" fill="#f6d365" />
          <rect x="7" y="15" width="10" height="8" fill="#4a7ea8" />
          <rect x="10" y="18" width="4" height="5" fill="#1c2f3f" />
        </svg>
      </TaskSlot>
      <TaskSlot className="w-[49px]">
        <svg width="26" height="26" viewBox="0 0 26 26">
          <path d="M1 9L13 0l12 9v15H1z" fill="#1a7fc4" />
          <path d="M1 10h24v14H1z" fill="#3ba3e6" />
          <path d="M1 10l12 9 12-9L13 1z" fill="#0f62a5" />
          <path d="M1 10l12 8 12-8v1L13 19 1 11z" fill="#bfe2fa" />
        </svg>
      </TaskSlot>
      <TaskSlot className="w-[49px]">
        <svg width="24" height="26" viewBox="0 0 24 26">
          <path d="M7 7c0-8 10-8 10 0" fill="none" stroke="#3ba3e6" strokeWidth="2" />
          <rect x="1" y="6" width="22" height="19" rx="3" fill="#eef1f4" />
          <rect x="7" y="11" width="4.500" height="4.500" fill="#f25022" />
          <rect x="12.500" y="11" width="4.500" height="4.500" fill="#7fba00" />
          <rect x="7" y="16.500" width="4.500" height="4.500" fill="#00a4ef" />
          <rect x="12.500" y="16.500" width="4.500" height="4.500" fill="#ffb900" />
        </svg>
      </TaskSlot>
      <TaskSlot className="w-[49px]" open>
        <svg width="25" height="25" viewBox="0 0 25 25">
          <circle cx="12.500" cy="12.500" r="12" fill="#e44134" />
          <path d="M12.500 12.500L2 19a12 12 0 0 0 12 5.500z" fill="#33a852" />
          <path d="M12.500 7H24a12 12 0 0 1-10 17.500z" fill="#fbbc05" />
          <circle cx="12.500" cy="12.500" r="6" fill="#fff" />
          <circle cx="12.500" cy="12.500" r="4.600" fill="#4285f4" />
        </svg>
      </TaskSlot>
      <TaskSlot className="w-[48px]" open active>
        <svg width="24" height="24" viewBox="0 0 24 24">
          <path d="M2 1h15l5 5v17H2z" fill="#e8f3e4" stroke="#8fbf8a" />
          <path d="M3 3h12v13H3z" fill="#2c8a3a" />
          <path d="M5 5h3l1.200 2.500L10.500 5h2.800L10.700 9.500l2.800 5h-3L9.200 12l-1.300 2.500H5l2.800-5z" fill="#fff" />
          <path d="M16 10h5M16 13h5M16 16h5M6 19h15" stroke="#5aa45f" />
        </svg>
      </TaskSlot>

      <div className="ml-auto h-full flex items-center">
        <svg width="28" height="26" viewBox="0 0 28 26" className="mr-[3px]">
          <path d="M7 3c0 5 3 8 8 7-1 5-7 6-10 2C3 9 4 5 7 3z" fill="#f3b53c" />
          <path d="M7 24a5 5 0 0 1-1-10 7 7 0 0 1 13-2 6 6 0 0 1 3 12z" fill="#a8c8e8" />
        </svg>
        <span className="text-[14px] whitespace-nowrap">25°C</span>
        <span className="ml-[11px] text-[13px] whitespace-nowrap text-[#e8ebee]" dir="rtl">غائم غالبًا</span>
        <ChevronUp size={18} strokeWidth={1.500} className="ml-[22px]" />
        <svg width="16" height="11" viewBox="0 0 16 11" className="ml-[7px]">
          <path d="M.5.5h13v10H.5zM14 3.500h2v4h-2z" fill="none" stroke="#fff" />
          <rect x="2" y="2" width="5" height="7" fill="#fff" />
        </svg>
        <svg width="12" height="20" viewBox="0 0 12 20" className="ml-[11px]">
          <path d="M1 1c2-1 8-1 10 0M1 19c2 1 8 1 10 0" stroke="#fff" fill="none" />
          <rect x="2" y="5" width="7" height="9" rx="1.500" fill="none" stroke="#fff" />
          <path d="M9 8l2-1.500v6L9 11" stroke="#fff" fill="none" />
        </svg>
        <Wifi size={17} strokeWidth={1.400} className="ml-[10px] -rotate-45 text-white" />
        <Volume2 size={17} strokeWidth={1.400} className="ml-[7px] text-white" />
        <span className="ml-[13px] text-[13px] w-[14px] text-center">ع</span>
        <div className="ml-[15px] w-[60px] text-center text-[13px] leading-[20px] whitespace-nowrap">
          <div>11:23 PM</div>
          <div>22-Oct-23</div>
        </div>
        <div className="relative ml-[16px] mr-[24px] w-[14px] h-[15px] bg-white flex flex-col gap-[2px] p-[2px]">
          <div className="h-px bg-[#1c2f3f]" />
          <div className="h-px bg-[#1c2f3f]" />
          <div className="h-px bg-[#1c2f3f]" />
          <div className="absolute -right-[9px] -bottom-[8px] w-[16px] h-[16px] rounded-full bg-[#cfd3d7] border border-[#1c2f3f] text-[#111] text-[11px] font-bold flex items-center justify-center">
            1
          </div>
        </div>
      </div>
    </div>
  )
}

export default function App() {
  return (
    <div className={`relative w-[1366px] h-[768px] overflow-hidden flex flex-col bg-white ${UI}`}>
      <TitleBar />
      <MenuTabs />
      <Ribbon />
      <FormulaBar />
      <div className="h-[3px] shrink-0 bg-white border-b border-[#9fa3a8]" />
      <div className="flex h-[526px] shrink-0">
        <VScrollbar />
        <Sheet />
      </div>
      <TabStrip />
      <StatusBar />
      <Taskbar />
      {/* watermark sits over the tabs and taskbar */}
      <div className="absolute left-[600px] top-[722px] text-[27px] font-bold text-white/30 font-['Liberation_Sans',sans-serif] pointer-events-none z-20">
        mostaql.com
      </div>
      <div className="absolute left-[622px] top-[668px] text-[38px] font-bold text-[#555]/25 font-['DejaVu_Sans',sans-serif] pointer-events-none z-20">
        مستقل
      </div>
    </div>
  )
}
